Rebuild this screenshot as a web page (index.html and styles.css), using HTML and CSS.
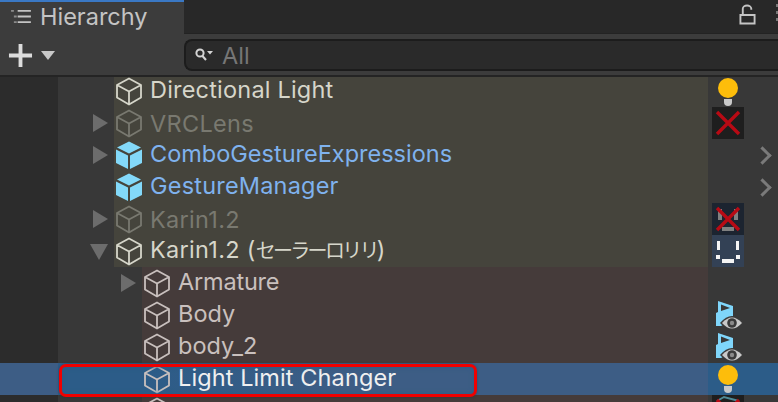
FILE: index.html
```html
<!DOCTYPE html>
<html lang="en">
<head>
<meta charset="utf-8">
<title>Hierarchy</title>
<link rel="stylesheet" href="styles.css">
</head>
<body>
<svg class="defs" width="0" height="0" aria-hidden="true">
  <defs>
    <symbol id="cube" viewBox="0 0 28 30">
      <path d="M14 2.500 26 9V21.500L14 28.500 2 21.500V9ZM2 9 14 15.500 26 9M14 15.500V28.500" fill="none" stroke="currentColor" stroke-width="1.800" stroke-linejoin="round"/>
    </symbol>
    <symbol id="solid" viewBox="0 0 28 30">
      <path d="M14 1.500 26 7.500 14 13.500 2 7.500Z" fill="#83d9f9"/>
      <path d="M1 9.500 13 15.500V29L1 23Z" fill="#83d9f9"/>
      <path d="M27 9.500 15 15.500V29L27 23Z" fill="#83d9f9"/>
    </symbol>
    <symbol id="bulb" viewBox="0 0 22 28">
      <circle cx="11" cy="10" r="10" fill="#fdbd0b"/>
      <path d="M7 21H15V24A4 4 0 0 1 7 24Z" fill="#c9c9c9"/>
    </symbol>
    <symbol id="eye" viewBox="0 0 28 30">
      <path fill-rule="evenodd" d="M3 1 18 6V20L6 26H1V13L3 12ZM6 4.500V11L15 8Z" fill="#7fd6fb"/>
      <path d="M5 23Q17 9 29 23 17 37 5 23Z" fill="#3a3a3a"/>
      <path d="M7 23Q17 12 27 23 17 34 7 23Z" fill="#c9c9c9"/>
      <circle cx="17" cy="23" r="4.800" fill="#3a3a3a"/>
      <circle cx="17" cy="23" r="2.200" fill="#8a8a8a"/>
    </symbol>
    <symbol id="cross" viewBox="0 0 32 32">
      <path d="M5 5 27 27M27 5 5 27" stroke="#b80a14" stroke-width="3.400" fill="none"/>
    </symbol>
  </defs>
</svg>

<header class="tabbar">
  <div class="tab">
    <svg class="tab-icon" viewBox="0 0 24 18" aria-hidden="true"><path d="M9 3H23M9 9H23M9 15H23" stroke="#c4c4c4" stroke-width="2"/><path d="M2 2H5V4H2ZM5 8H8V10H5ZM5 14H8V16H5Z" fill="#8c8c8c"/></svg>
    <span>Hierarchy</span>
  </div>
  <div class="tab-rest">
    <svg class="lock" viewBox="0 0 18 22" aria-hidden="true"><path d="M1.500 11.500H16.500V20.500H1.500ZM4 11V5A4.500 3.500 0 0 1 13 5V6" fill="none" stroke="#c4c4c4" stroke-width="2"/></svg>
    <span class="kebab"></span>
  </div>
</header>

<div class="toolbar">
  <div class="add">
    <svg class="plus" viewBox="0 0 26 26" aria-hidden="true"><path d="M13 1V25M1 13H25" stroke="#dcdcdc" stroke-width="4"/></svg>
    <span class="caret"></span>
  </div>
  <div class="search">
    <svg class="glass" viewBox="0 0 20 16" aria-hidden="true"><circle cx="6" cy="6" r="3.600" fill="none" stroke="#d4d4d4" stroke-width="2"/><path d="M8.500 9 12 13" stroke="#d4d4d4" stroke-width="2"/><path d="M13 4H19L16 7.500Z" fill="#d4d4d4"/></svg>
    <span>All</span>
  </div>
</div>

<main class="tree">
  <div class="row first">
    <div class="indent"></div>
    <div class="cell olive"><svg class="node c-light"><use href="#cube"/></svg><span class="label c-light wide">Directional Light</span></div>
    <div class="side"><svg class="bulb"><use href="#bulb"/></svg></div>
  </div>
  <div class="row">
    <div class="indent"><i class="arrow"></i></div>
    <div class="cell olive"><svg class="node c-dim"><use href="#cube"/></svg><span class="c-dim">VRCLens</span></div>
    <div class="side"><div class="badge"><svg><use href="#cross"/></svg></div></div>
  </div>
  <div class="row">
    <div class="indent"><i class="arrow"></i></div>
    <div class="cell olive"><svg class="node"><use href="#solid"/></svg><span class="label c-blue">ComboGestureExpressions</span></div>
    <div class="side"><i class="chev"></i></div>
  </div>
  <div class="row">
    <div class="indent"></div>
    <div class="cell olive"><svg class="node"><use href="#solid"/></svg><span class="label c-blue wide">GestureManager</span></div>
    <div class="side"><i class="chev"></i></div>
  </div>
  <div class="row">
    <div class="indent"><i class="arrow"></i></div>
    <div class="cell olive"><svg class="node c-dim"><use href="#cube"/></svg><span class="c-dim">Karin1.2</span></div>
    <div class="side"><div class="badge navy"><span class="face-off"></span><svg><use href="#cross"/></svg></div></div>
  </div>
  <div class="row">
    <div class="indent"><i class="arrow down"></i></div>
    <div class="cell olive"><svg class="node c-light"><use href="#cube"/></svg><span class="label c-light"><span class="latin">Karin1.2 (</span><span class="kana">セーラーロリリ</span>)</span></div>
    <div class="side"><div class="badge slate"><svg viewBox="0 0 32 32"><path d="M5 6H8V15H5ZM24 6H27V15H24ZM4 20H8V24H4ZM24 20H28V24H24ZM10 24H22V28H10Z" fill="#f4f4f4"/></svg></div></div>
  </div>
  <div class="row">
    <div class="indent deep"><i class="arrow"></i></div>
    <div class="cell brown"><svg class="node c-soft"><use href="#cube"/></svg><span class="label c-soft tight">Armature</span></div>
    <div class="side"></div>
  </div>
  <div class="row">
    <div class="indent deep"></div>
    <div class="cell brown"><svg class="node c-soft"><use href="#cube"/></svg><span class="label c-soft">Body</span></div>
    <div class="side"><svg class="eye"><use href="#eye"/></svg></div>
  </div>
  <div class="row">
    <div class="indent deep"></div>
    <div class="cell brown"><svg class="node c-soft"><use href="#cube"/></svg><span class="label c-soft">body_2</span></div>
    <div class="side"><svg class="eye"><use href="#eye"/></svg></div>
  </div>
  <div class="row selected">
    <div class="indent deep"></div>
    <div class="cell selected-cell"><svg class="node c-soft"><use href="#cube"/></svg><span class="label c-white">Light Limit Changer</span></div>
    <div class="side"><svg class="bulb"><use href="#bulb"/></svg></div>
  </div>
  <div class="row">
    <div class="indent deep"></div>
    <div class="cell brown"><svg class="node c-soft"><use href="#cube"/></svg></div>
    <div class="side"><div class="badge"><svg viewBox="0 0 32 32"><path d="M5 6 12 2 27 6" stroke="#4f8a96" stroke-width="2" fill="none"/><path d="M5 5 27 27M27 5 5 27" stroke="#b80a14" stroke-width="3.400" fill="none"/></svg></div></div>
  </div>
  <div class="highlight"></div>
</main>
</body>
</html>
```
FILE: styles.css
```css
* { box-sizing: border-box; }
html, body { margin: 0; height: 402px; overflow: hidden; }
body {
  width: 778px;
  background: #383838;
  font-family: Inter, "Noto Sans CJK JP", sans-serif;
  font-size: 23.5px;
  display: flex;
  flex-direction: column;
}
.defs { position: absolute; }

.tabbar { display: flex; height: 34px; flex: none; background: #282828; }
.tab {
  width: 184px;
  background: #3c3c3c;
  border-top: 2px solid #3a78c4;
  display: flex;
  align-items: center;
  gap: 8px;
  padding: 0 0 3px 9px;
  color: #c4c4c4;
}
.tab-icon { width: 23px; height: 17px; }
.tab-rest { flex: 1; display: flex; justify-content: flex-end; align-items: flex-start; padding: 4px 0 0; gap: 20px; border-bottom: 1px solid #232323; }
.lock { width: 17px; height: 21px; }
.kebab { width: 2px; height: 20px; background: repeating-linear-gradient(#777 0 3px, transparent 3px 7px); }

.toolbar {
  height: 43px;
  flex: none;
  background: #3c3c3c;
  display: flex;
  align-items: center;
  padding: 3px 0 2px 8px;
  border-bottom: 2px solid #242424;
}
.add { display: flex; align-items: center; gap: 8px; width: 176px; }
.plus { width: 25px; height: 25px; }
.caret { width: 0; height: 0; border: 7.5px solid transparent; border-top: 9px solid #c8c8c8; border-bottom: 0; }
.search {
  flex: 1;
  height: 32px;
  background: #2a2a2a;
  border: 2px solid #1c1c1c;
  border-right: 0;
  border-radius: 8px 0 0 8px;
  display: flex;
  align-items: center;
  gap: 8px;
  padding: 0 0 0 8px;
  color: #767676;
}
.glass { width: 20px; height: 16px; }

.tree { position: relative; flex: 1; min-height: 0; overflow: hidden; }
.row { display: flex; height: 32px; }
.row.first { height: 30px; }
.first .node { margin-bottom: 2px; }
.indent {
  width: 114px;
  flex: none;
  background: linear-gradient(90deg, #2c2c2c 58px, #383838 58px);
  display: flex;
  align-items: center;
  justify-content: flex-end;
  padding-right: 6px;
}
.indent.deep { width: 142px; }
.cell {
  flex: 1;
  display: flex;
  align-items: center;
  gap: 7px;
  padding-left: 1px;
  white-space: nowrap;
  line-height: 24px;
}
.label { margin-bottom: 2px; }
.first .label { margin-bottom: 4px; }
.wide { letter-spacing: .2px; }
.tight { letter-spacing: -.2px; }
.latin { letter-spacing: .3px; }
.kana { font-family: "Noto Sans CJK JP", sans-serif; font-size: 20px; letter-spacing: -2.700px; }
.olive { background: #45443c; }
.brown { background: #453b3a; }
.selected .indent { background: linear-gradient(90deg, #3d5d85 58px, #2c5c88 58px); }
.selected-cell { background: linear-gradient(90deg, #2c5c88, #3d5d85 200px); }
.side {
  width: 70px;
  flex: none;
  background: #383838;
  display: flex;
  align-items: center;
  padding-left: 4px;
  position: relative;
}
.selected .side { background: #2c5c88; }

.node { width: 28px; height: 30px; flex: none; }
.c-light { color: #d6d6ca; }
span.c-dim { margin-top: 2px; }
.c-dim { color: #797970; letter-spacing: .3px; }
.c-blue { color: #7fb2ee; }
.c-soft { color: #c9c0be; }
.c-white { color: #f0f0f0; letter-spacing: .1px; }

.arrow { width: 0; height: 0; border: 9px solid transparent; border-left: 15px solid #6c6c6c; border-right: 0; }
.arrow.down { border: 9px solid transparent; border-top: 16px solid #6c6c6c; border-bottom: 0; margin-top: 2px; }

.bulb { width: 22px; height: 28px; margin-left: 5px; }
.eye { width: 28px; height: 30px; margin-left: 3px; }
.badge { width: 32px; height: 32px; background: #1e1e1e; position: relative; }
.badge svg { width: 32px; height: 32px; display: block; position: relative; }
.navy { background: #1c2430; }
.slate { background: #334155; }
.face-off {
  position: absolute;
  left: 6px; top: 6px; width: 20px; height: 22px;
  background: linear-gradient(#808080 0 0) 0 0 / 4px 11px no-repeat,
              linear-gradient(#808080 0 0) 100% 0 / 4px 11px no-repeat,
              linear-gradient(#808080 0 0) 50% 100% / 12px 4px no-repeat;
}
.chev {
  position: absolute;
  left: 48px;
  width: 13px; height: 13px;
  border-top: 3px solid #7a7a7a;
  border-right: 3px solid #7a7a7a;
  transform: rotate(45deg);
}

.highlight {
  position: absolute;
  left: 59px;
  top: 287px;
  width: 418px;
  height: 33px;
  border: 3px solid #f00000;
  border-radius: 7px;
  box-shadow: inset 0 0 5px #2a5a86, 0 0 3px rgba(20,40,60,.4);
}
```
